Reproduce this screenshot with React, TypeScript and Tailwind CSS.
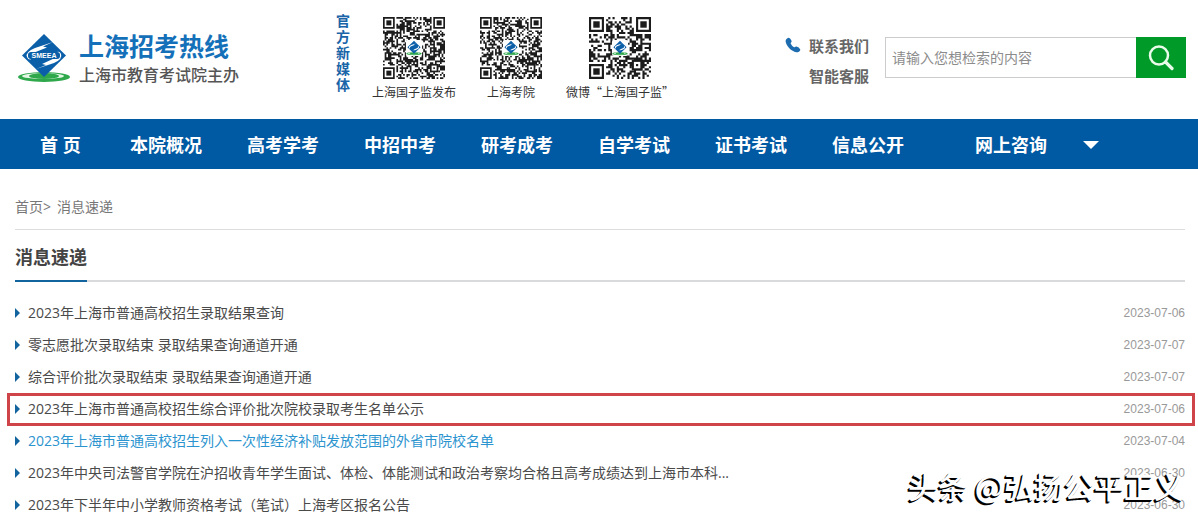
import React from "react";

interface NewsItem {
  title: string;
  date: string;
  visited?: boolean;
  marked?: boolean;
}

const navItems = ["本院概况", "高考学考", "中招中考", "研考成考", "自学考试", "证书考试", "信息公开"];

const news: NewsItem[] = [
  { title: "2023年上海市普通高校招生录取结果查询", date: "2023-07-06" },
  { title: "零志愿批次录取结束 录取结果查询通道开通", date: "2023-07-07" },
  { title: "综合评价批次录取结束 录取结果查询通道开通", date: "2023-07-07" },
  { title: "2023年上海市普通高校招生综合评价批次院校录取考生名单公示", date: "2023-07-06", marked: true },
  { title: "2023年上海市普通高校招生列入一次性经济补贴发放范围的外省市院校名单", date: "2023-07-04", visited: true },
  { title: "2023年中央司法警官学院在沪招收青年学生面试、体检、体能测试和政治考察均合格且高考成绩达到上海市本科...", date: "2023-06-30" },
  { title: "2023年下半年中小学教师资格考试（笔试）上海考区报名公告", date: "2023-06-30" },
];

const qrCodes = [
  { label: "上海国子监发布", size: 37, seed: 11 },
  { label: "上海考院", size: 37, seed: 47 },
  { label: "微博“上海国子监”", size: 29, seed: 83 },
];

function Emblem() {
  return (
    <>
      <ellipse cx="27" cy="43" rx="26" ry="5" fill="#2fa84c" />
      <ellipse cx="26" cy="42" rx="21" ry="3" fill="#e4f6e4" />
      <ellipse cx="27" cy="42" rx="15" ry="3" fill="#2fa84c" />
      <path d="M27 0 L49 21.500 L27 43 L5 21.500 Z" fill="#0b5fa8" />
      <path d="M36 8 L18 14 Q8 18 10 23 Q11 26 14 25.500 Q11 22 16 19 L30 13.500 L26 12.500 Z" fill="#fff" />
      <path d="M19 35 L37 29 Q46 25 44 20 Q43 17 40 18 Q43 21 38 24 L25 30 L29 31 Z" fill="#fff" />
    </>
  );
}

function QrCode({ size, seed }: { size: number; seed: number }) {
  let state = seed * 7919;
  let d = "";
  for (let y = 0; y < size; y++) {
    for (let x = 0; x < size; x++) {
      state = (state * 1103515245 + 12345) % 2147483648;
      const inFinder = (x < 8 && y < 8) || (x >= size - 8 && y < 8) || (x < 8 && y >= size - 8);
      if (!inFinder && state / 2147483648 < 0.52) d += `M${x} ${y}h1v1h-1z`;
    }
  }
  const corners = [[0, 0], [size - 7, 0], [0, size - 7]];
  const mid = size / 2;
  const hole = size * 0.26;

  return (
    <svg viewBox={`0 0 ${size} ${size}`} className="size-[62px]" aria-hidden="true">
      <path d={d} fill="#1c1c1c" />
      {corners.map(([x, y]) => (
        <g key={`${x}-${y}`} fill="#1c1c1c">
          <path d={`M${x} ${y}h7v7h-7zM${x + 1} ${y + 1}v5h5v-5z`} fillRule="evenodd" />
          <rect x={x + 2} y={y + 2} width="3" height="3" />
        </g>
      ))}
      <rect x={size - 9} y={size - 9} width="5" height="5" fill="#1c1c1c" />
      <rect x={size - 8} y={size - 8} width="3" height="3" fill="#fff" />
      <rect x={size - 7} y={size - 7} width="1" height="1" fill="#1c1c1c" />
      <rect x={mid - hole / 2} y={mid - hole / 2} width={hole} height={hole} rx="1" fill="#fff" />
      <svg x={mid - hole / 2} y={mid - hole / 2} width={hole} height={hole} viewBox="0 -1 54 50">
        <Emblem />
      </svg>
    </svg>
  );
}

function Logo() {
  return (
    <a href="#" className="flex w-[336px] items-center gap-2 pt-[7px] pl-[17px]">
      <svg viewBox="0 0 54 49" className="h-[49px] w-[54px] shrink-0">
        <Emblem />
        <rect x="11" y="18" width="32" height="7" rx="3" fill="#0b5fa8" />
        <text x="27" y="24" textAnchor="middle" fontSize="7" fontWeight="bold" fill="#fff" className="font-['Liberation_Sans',sans-serif]">
          SMEEA
        </text>
      </svg>
      <span className="flex flex-col whitespace-nowrap">
        <span className="text-[25px] leading-[32px] font-bold text-[#1470b8]">上海招考热线</span>
        <span className="text-base leading-[26px] font-medium text-[#555]">上海市教育考试院主办</span>
      </span>
    </a>
  );
}

function Header() {
  return (
    <header className="flex h-[119px] items-start">
      <div className="flex h-[110px] items-center">
        <Logo />
      </div>
      <div className="flex pt-[13px]">
        <p className="w-[14px] text-sm leading-[16px] font-bold text-[#1a65a8]">官方新媒体</p>
        <ul className="ml-[22px] flex gap-6 pt-1">
          {qrCodes.map((qr) => (
            <li key={qr.label} className="flex flex-col items-center gap-1">
              <QrCode size={qr.size} seed={qr.seed} />
              <span className="text-xs leading-[18px] whitespace-nowrap text-[#333] font-['Noto_Sans_CJK_SC',sans-serif]">{qr.label}</span>
            </li>
          ))}
        </ul>
      </div>
      <div className="ml-auto flex pt-[31px] pr-3">
        <svg viewBox="0 0 16 16" className="mt-[6px] mr-2 size-4" fill="#1d6cb0">
          <path d="M3.500 0.800 C4.800 0.500 7 3.800 6.600 4.800 C6.300 5.500 5.500 5.800 5.700 6.500 C6.200 7.900 7.900 9.700 9.300 10.300 C10.100 10.500 10.700 9.600 11.500 9.600 C12.700 9.700 15.600 12 15.300 13 C14.800 14.500 13 15.500 11.300 15.300 C6.500 14.500 1 8.900 0.600 4.300 C0.500 2.700 2.100 1.100 3.500 0.800 Z" />
        </svg>
        <div className="flex flex-col text-[15px] leading-[30px] font-bold text-[#666]">
          <a href="#">联系我们</a>
          <a href="#">智能客服</a>
        </div>
        <form className="mt-[6px] ml-4 flex h-[41px]" onSubmit={(e) => e.preventDefault()}>
          <input
            type="text"
            aria-label="检索"
            placeholder="请输入您想检索的内容"
            className="w-[251px] border border-r-0 border-[#ccc] px-[6px] text-sm text-[#555] placeholder:text-[#8c8c8c] focus:outline-none"
          />
          <button type="submit" aria-label="搜索" className="flex w-[50px] items-center justify-center bg-[#009a29]">
            <svg viewBox="0 0 26 26" className="size-[26px]" fill="none" stroke="#e9fbe9" strokeLinecap="round">
              <circle cx="11" cy="10.500" r="9" strokeWidth="2.500" />
              <path d="M17.500 17 L24 23.500" strokeWidth="3.200" />
            </svg>
          </button>
        </form>
      </div>
    </header>
  );
}

function Nav() {
  return (
    <nav className="flex h-[50px] items-center gap-[45px] bg-[#0059a3] pt-px pl-10 text-lg font-bold whitespace-nowrap text-white">
      <a href="#" className="w-[45px]">首 页</a>
      {navItems.map((item) => (
        <a key={item} href="#">{item}</a>
      ))}
      <a href="#" className="ml-[26px]">网上咨询</a>
      <button type="button" aria-label="更多" className="-ml-[9px]">
        <svg viewBox="0 0 16 8" className="h-2 w-4" fill="#fff">
          <path d="M0 0H16L8 8Z" />
        </svg>
      </button>
    </nav>
  );
}

function NewsRow({ item }: { item: NewsItem }) {
  return (
    <li className="relative flex h-8 items-center justify-between">
      {item.marked && <div className="pointer-events-none absolute top-0 -right-[10px] -bottom-px -left-2 border-[3px] border-[#cf4449]" />}
      <a href="#" className={item.visited ? "flex items-center text-sm text-[#2b94cf]" : "flex items-center text-sm text-[#4a4a4a]"}>
        <svg viewBox="0 0 5 10" className="mr-2 h-[10px] w-[5px]" fill="#11649e">
          <path d="M0 0L5 5L0 10Z" />
        </svg>
        {item.title}
      </a>
      <time className="text-xs text-[#999] font-['Liberation_Sans',sans-serif]">{item.date}</time>
    </li>
  );
}

export default function App() {
  return (
    <div className="relative h-screen overflow-hidden bg-white font-['Open_Sans','Noto_Sans_CJK_SC',sans-serif]">
      <Header />
      <Nav />
      <main className="pr-[13px] pl-[15px]">
        <div className="flex h-[61px] items-end border-b border-[#ddd] pb-3 text-sm text-[#777]">
          <a href="#">首页</a>
          <span className="mr-[6px]">&gt;</span>
          <a href="#">消息速递</a>
        </div>
        <div className="flex h-[52px] border-b-2 border-[#d9dadb]">
          <h1 className="-mb-[2px] flex items-center border-b-2 border-[#11649e] pt-1 text-lg font-bold text-[#444]">消息速递</h1>
        </div>
        <ul className="pt-[15px]">
          {news.map((item) => (
            <NewsRow key={item.title} item={item} />
          ))}
        </ul>
      </main>
      {/* Watermark over the list */}
      <p className="pointer-events-none absolute right-[14px] bottom-2 text-[30px] leading-[46px] font-medium whitespace-nowrap text-white [text-shadow:-1px_1px_0_#000,-2px_2px_0_#000] font-['Noto_Sans_CJK_SC',sans-serif]">
        头条 @弘扬公平正义
      </p>
    </div>
  );
}
